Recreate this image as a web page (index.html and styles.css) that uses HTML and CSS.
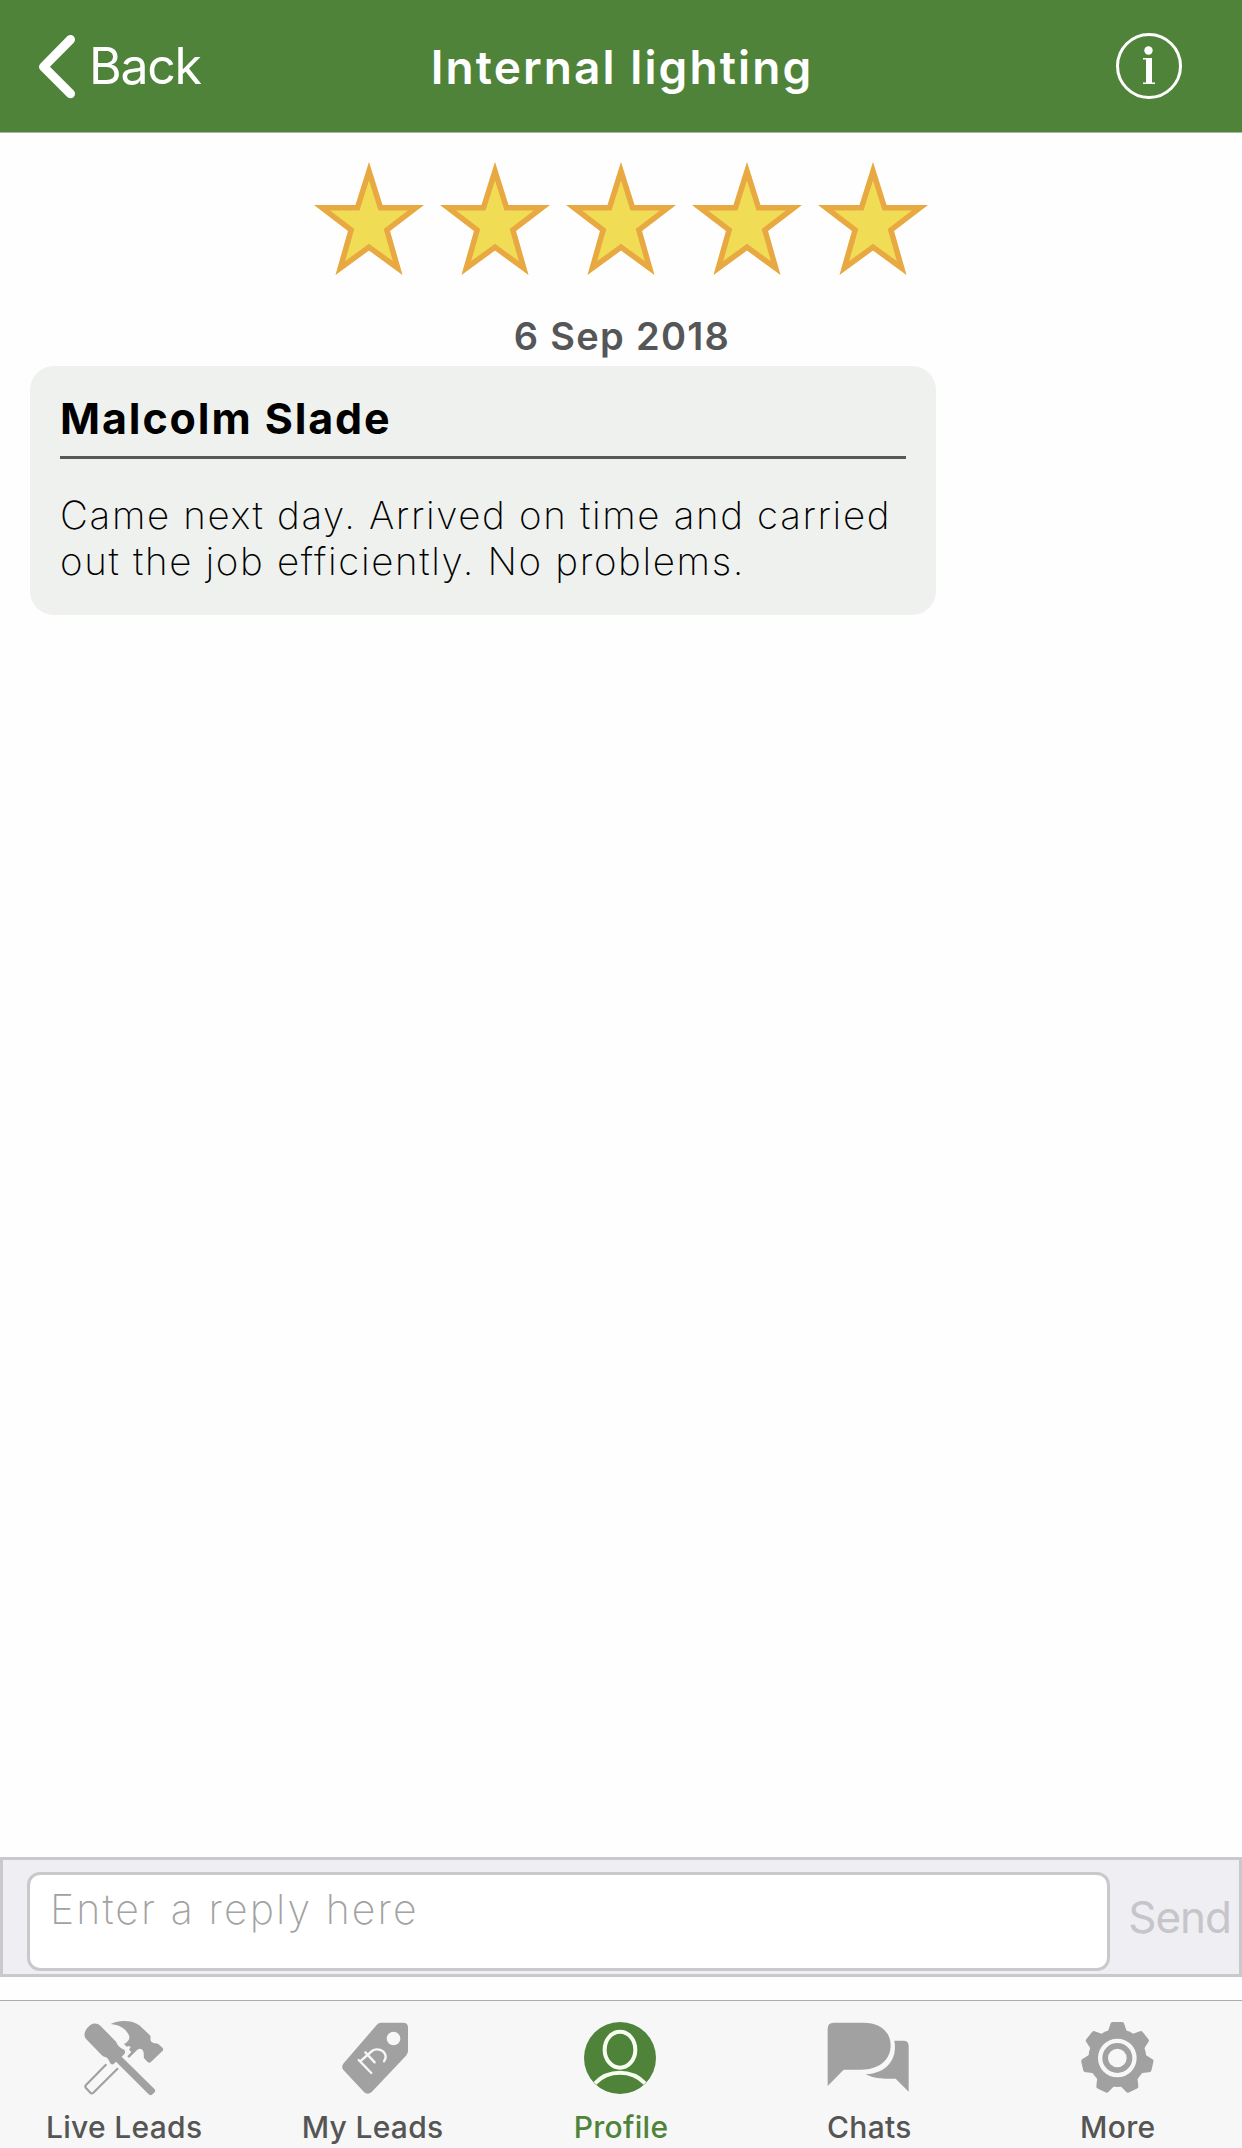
FILE: index.html
```html
<!DOCTYPE html>
<html lang="en">
<head>
<meta charset="utf-8">
<title>Internal lighting</title>
<link rel="stylesheet" href="styles.css">
</head>
<body>
<div class="app">
  <header class="navbar">
    <a class="back">
      <svg class="back-icon" width="37" height="64" viewBox="0 0 37 64"><path d="M32.5 4.5 5.5 31.8l27 27" fill="none" stroke="#fff" stroke-width="9" stroke-linecap="round" stroke-linejoin="round"/></svg>
      <span>Back</span>
    </a>
    <h1 class="title">Internal lighting</h1>
    <svg class="info" width="66" height="66" viewBox="0 0 66 66" fill="#fff"><circle cx="33" cy="33" r="31.5" fill="none" stroke="#fff" stroke-width="3"/><circle cx="32.5" cy="17.5" r="4.2"/><path d="M27 25h9v24.500h3V51H27v-1.500h3V26.500h-3z"/></svg>
  </header>

  <main class="content">
    <div class="stars">
      <svg class="star" viewBox="0 0 112 114"><use href="#star"/></svg>
      <svg class="star" viewBox="0 0 112 114"><use href="#star"/></svg>
      <svg class="star" viewBox="0 0 112 114"><use href="#star"/></svg>
      <svg class="star" viewBox="0 0 112 114"><use href="#star"/></svg>
      <svg class="star" viewBox="0 0 112 114"><use href="#star"/></svg>
    </div>
    <p class="date">6 Sep 2018</p>
    <article class="review">
      <h2 class="author">Malcolm Slade</h2>
      <p class="text">Came next day. Arrived on time and carried<br>out the job efficiently. No problems.</p>
    </article>
  </main>

  <form class="reply">
    <textarea class="reply-input" placeholder="Enter a reply here"></textarea>
    <button class="send" type="button">Send</button>
  </form>

  <nav class="tabs">
    <a class="tab">
      <svg class="tab-icon" viewBox="238 78 270 252">
        <path d="M260 148c-8-9-7-21 2-33l9-9c10-8 22-7 31 1l47 48c3 4 3 8 6 11 4 5 9 9 16 12 6 3 7 9 3 14l-8 8 99 98c2 3 2 6 0 9l-8 7c-3 2-7 2-10-1l-98-98-7 7c-5 3-10 0-12-5-2-7-5-12-13-16-5-2-8-3-12-7z"/>
        <path d="M333 102c25-13 65-12 86 4l31 29c6 6-1 13 5 20 6 6 15 3 22 8l12 11c2 3 2 5 0 8l-36 35c-3 2-6 2-9-1l-8-8c-7-8-1-17-6-26-4-7-10-8-17-3l-25 25-5-5 12-13-7-7 5-8-6-3-6 2-8-8c13-7 20-16 14-28-11-21-29-29-54-32z"/>
        <path d="m320 223-61 62q-4 4 0 9l13 14q4 5 9 0l74-73" fill="none" stroke="#a1a1a1" stroke-width="6.500"/>
      </svg>
      <span>Live Leads</span>
    </a>
    <a class="tab">
      <svg class="tab-icon" viewBox="143 78 270 252">
        <path d="M302 98h67q14 0 14 14v71q0 8-6 14L274 306q-12 11-23 0l-61-65q-9-10 0-21L289 105q6-7 13-7z"/>
        <circle cx="339.500" cy="145.500" r="20.500" fill="#f7f7f7"/>
        <path d="m235 210 38 39M243 211l32-28c10-8 25-6 34 2 8 8 9 19 2 29M255 187l28 30" fill="none" stroke="#f7f7f7" stroke-width="7" stroke-linecap="round" stroke-linejoin="round"/>
      </svg>
      <span>My Leads</span>
    </a>
    <a class="tab active">
      <svg class="tab-icon" viewBox="108 78 270 252">
        <circle cx="240" cy="204" r="108"/>
        <g fill="none" stroke="#f7fff0" stroke-width="12"><ellipse cx="240" cy="179" rx="46" ry="54"/><path d="M165 280C205 238 274 238 315 280"/></g>
      </svg>
      <span>Profile</span>
    </a>
    <a class="tab">
      <svg class="tab-icon" viewBox="103 78 270 252">
        <path d="M132 98h88c55 0 83 30 83 68 0 46-38 73-88 73h-53l-48 49V116q0-18 18-18z"/>
        <path d="M314 152h27q16 0 16 16v137l-39-39h-29c-25 0-43-4-61-13 59-3 97-42 86-101z"/>
      </svg>
      <span>Chats</span>
    </a>
    <a class="tab">
      <svg class="tab-icon" viewBox="848 78 270 252">
        <circle cx="981" cy="204" r="87"/>
        <g id="teeth">
          <path id="tooth" d="M950 132 960 103q1-7 7-7h28q6 0 7 7l10 29z"/>
          <use href="#tooth" transform="rotate(51.430 981 204)"/>
          <use href="#tooth" transform="rotate(102.860 981 204)"/>
          <use href="#tooth" transform="rotate(154.290 981 204)"/>
          <use href="#tooth" transform="rotate(205.710 981 204)"/>
          <use href="#tooth" transform="rotate(257.140 981 204)"/>
          <use href="#tooth" transform="rotate(308.570 981 204)"/>
        </g>
        <circle cx="981" cy="204" r="51.500" fill="none" stroke="#f7f7f7" stroke-width="13"/>
        <circle cx="981" cy="204" r="28" fill="#f7f7f7"/>
      </svg>
      <span>More</span>
    </a>
  </nav>
</div>

<svg width="0" height="0" class="defs">
  <defs>
    <clipPath id="star-clip"><path d="M56 0 69.500 43H111L77 69 89.500 113 56 88.500 22.500 113 35 69 1 43h41.500z"/></clipPath>
    <path id="star" d="M56 0 69.500 43H111L77 69 89.500 113 56 88.500 22.500 113 35 69 1 43h41.500z" fill="#f1dc56" stroke="#e8a943" stroke-width="11" clip-path="url(#star-clip)"/>
  </defs>
</svg>
</body>
</html>
```

FILE: styles.css
```css
* { box-sizing: border-box; }

body {
  margin: 0;
  background: #fefefe;
  font-family: Inter, "Liberation Sans", sans-serif;
}

.app {
  display: flex;
  flex-direction: column;
  height: 2148px;
}

.defs { position: absolute; }

.navbar {
  display: grid;
  grid-template-columns: 1fr auto 1fr;
  align-items: center;
  height: 133px;
  padding: 0 60px 0 38px;
  background: #50833a;
  border-bottom: 1px solid #a9b8a1;
  color: #fff;
}

.back {
  display: flex;
  align-items: center;
  gap: 14px;
  font-size: 50px;
  letter-spacing: -1.3px;
}

.back-icon { margin-top: 1px; }

.title {
  margin: 0;
  padding: 1px 0 0 24px;
  font-size: 46px;
  font-weight: 600;
  letter-spacing: 2.1px;
}

.info { justify-self: end; }

.content {
  flex: 1;
  padding: 29px 30px 0;
}

.stars {
  display: flex;
  justify-content: center;
  gap: 14px;
}

.star {
  width: 112px;
  height: 114px;
}

.date {
  margin: 37px 0 7px;
  padding-left: 2px;
  color: #555658;
  font-size: 38px;
  font-weight: 600;
  line-height: 46px;
  letter-spacing: 1.3px;
  text-align: center;
}

.review {
  width: 906px;
  height: 249px;
  padding: 26px 30px 0;
  border-radius: 24px;
  background: #eff1ee;
  color: #000;
}

.author {
  margin: 0 0 33px;
  padding-bottom: 12px;
  border-bottom: 3px solid #58585b;
  font-size: 43px;
  font-weight: 700;
  line-height: 52px;
  letter-spacing: 1.9px;
}

.text {
  margin: 0;
  font-size: 38.5px;
  font-weight: 200;
  line-height: 46px;
  letter-spacing: 1.65px;
  white-space: nowrap;
}

.reply {
  display: flex;
  align-items: flex-start;
  height: 120px;
  margin-bottom: 23px;
  padding: 12px 8px 0 24px;
  border: 3px solid #c9c9cb;
  background: #efeef3;
}

.reply-input {
  width: 1083px;
  height: 99px;
  padding: 9px 20px;
  border: 3px solid #c9c9cb;
  border-radius: 13px;
  background: #fff;
  font: 200 41px/50px Inter, "Liberation Sans", sans-serif;
  letter-spacing: 2.1px;
  resize: none;
}

.reply-input::placeholder { color: #a2a2a2; }

.send {
  margin-left: auto;
  padding: 17px 0 0;
  border: 0;
  background: none;
  color: #c5c5ca;
  font: 400 44px/56px Inter, "Liberation Sans", sans-serif;
  letter-spacing: -1px;
}

.tabs {
  display: grid;
  grid-template-columns: repeat(5, 1fr);
  height: 148px;
  border-top: 1px solid #adadad;
  background: #f7f7f7;
}

.tab {
  display: flex;
  flex-direction: column;
  align-items: center;
  padding-top: 15px;
  color: #555;
  fill: #a1a1a1;
  font-size: 30px;
  font-weight: 450;
  line-height: 36px;
  letter-spacing: .3px;
}

.tab-icon {
  width: 90px;
  height: 84px;
  margin-bottom: 9px;
}

.active {
  color: #50833a;
  fill: #50833a;
}
```
